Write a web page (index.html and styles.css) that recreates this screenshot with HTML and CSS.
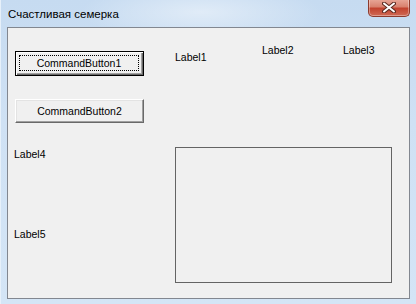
FILE: index.html
```html
<!DOCTYPE html>
<html lang="ru">
<head>
    <meta charset="UTF-8">
    <title>Счастливая семерка</title>
    <link rel="stylesheet" href="styles.css">
</head>
<body>
    <div class="window">
        <div class="titlebar">
            <span class="title">Счастливая семерка</span>
            <div class="close-btn">
                <svg width="14" height="11" viewBox="0 0 14 11">
                    <path d="M2 1.5 L12 9.5 M12 1.5 L2 9.5" stroke="#5a2a20" stroke-width="4" stroke-linecap="round"/>
                    <path d="M2 1.5 L12 9.5 M12 1.5 L2 9.5" stroke="#ffffff" stroke-width="2" stroke-linecap="round"/>
                </svg>
            </div>
        </div>

        <div class="client">
            <div class="left-col">
                <button class="cmd default"><span class="focus">CommandButton1</span></button>
                <button class="cmd second">CommandButton2</button>
                <div class="label label4">Label4</div>
                <div class="label label5">Label5</div>
            </div>

            <div class="right-col">
                <div class="label-row">
                    <div class="label label1">Label1</div>
                    <div class="label label2">Label2</div>
                    <div class="label label3">Label3</div>
                </div>
                <div class="frame"></div>
            </div>
        </div>
    </div>
</body>
</html>
```

FILE: styles.css
```css
body {
    margin: 0;
    padding: 0;
    font-family: "Liberation Sans", Arial, sans-serif;
}

.window {
    width: 416px;
    height: 304px;
    box-sizing: border-box;
    padding: 0 6px 5px 6px;
    display: flex;
    flex-direction: column;
    background:
        radial-gradient(ellipse 120px 30px at 200px 12px, rgba(255,255,255,0.45), rgba(255,255,255,0)),
        linear-gradient(to bottom, #c6dbf1 0%, #cfe1f4 40%, #d4e5f6 100%);
    border-left: 1px solid #e6f0fa;
}

.titlebar {
    height: 27px;
    display: flex;
    align-items: flex-start;
    flex-shrink: 0;
}

.title {
    font-size: 11.5px;
    line-height: 14px;
    margin-top: 7px;
    margin-left: 1px;
    color: #000;
}

.close-btn {
    margin-left: auto;
    margin-top: -1px;
    width: 42px;
    height: 18px;
    box-sizing: border-box;
    border: 1px solid #8c3b2e;
    border-top: none;
    border-radius: 0 0 5px 5px;
    background: linear-gradient(to bottom, #e9a99a 0%, #d9826f 45%, #c2432f 55%, #cf6a55 100%);
    box-shadow: inset 0 0 0 1px rgba(255,255,255,0.35);
    display: flex;
    align-items: center;
    justify-content: center;
}

.client {
    flex: 1;
    background-color: #f0f0f0;
    border: 1px solid #828790;
    display: flex;
    padding: 16px 0 0 6px;
}

.left-col {
    width: 161px;
    display: flex;
    flex-direction: column;
    align-items: flex-start;
}

.label {
    font-size: 10.5px;
    line-height: 13px;
    color: #000;
}

.cmd {
    margin-left: 1px;
    width: 129px;
    font-family: "Liberation Sans", Arial, sans-serif;
    font-size: 10.5px;
    color: #000;
    background-color: #f0f0f0;
    padding: 0;
    display: flex;
    align-items: center;
    justify-content: center;
    box-sizing: border-box;
}

.cmd.default {
    margin-top: 7px;
    height: 25px;
    border: 1px solid #000;
    box-shadow: inset 1px 1px #ffffff, inset -1px -1px #696969, inset -2px -2px #a0a0a0;
    padding: 3px 4px 4px 3px;
}

.cmd .focus {
    flex: 1;
    align-self: stretch;
    display: flex;
    align-items: center;
    justify-content: center;
    border: 1px dotted #000;
}

.cmd.second {
    margin-top: 23px;
    height: 24px;
    border: 1px solid;
    border-color: #ffffff #696969 #696969 #ffffff;
    box-shadow: inset -1px -1px #a0a0a0, inset 1px 1px #e3e3e3;
    padding-bottom: 1px;
}

.label4 {
    margin-top: 25px;
}

.label5 {
    margin-top: 67px;
}

.right-col {
    display: flex;
    flex-direction: column;
}

.label-row {
    display: flex;
    align-items: flex-start;
}

.label1 {
    width: 87px;
    margin-top: 7px;
}

.label2 {
    width: 81px;
}

.frame {
    margin-top: 83px;
    width: 217px;
    height: 136px;
    box-sizing: border-box;
    border: 1px solid #646464;
}
```
